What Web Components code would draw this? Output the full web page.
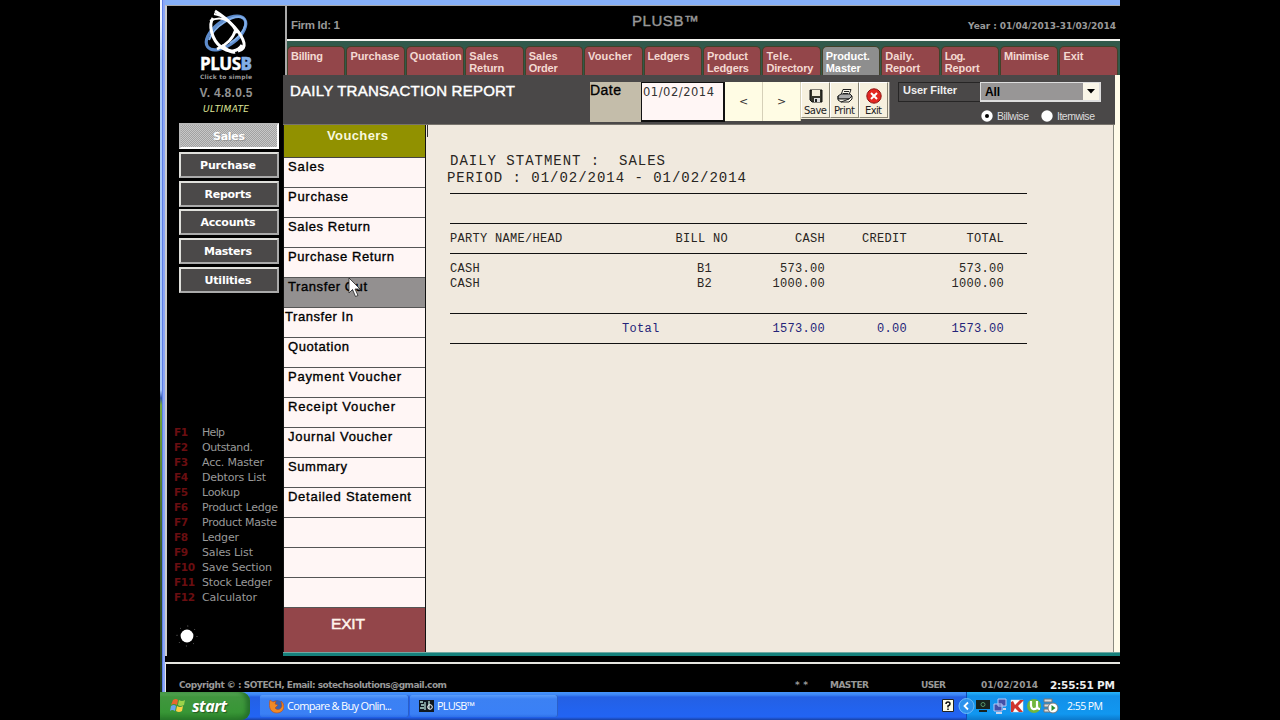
<!DOCTYPE html>
<html lang="en">
<head>
<meta charset="utf-8">
<title>PLUSB</title>
<style>
  body { margin: 0; background: #000; overflow: hidden; }
</style>
</head>
<body>
<plusb-desktop></plusb-desktop>

<script>
// text stretched or tightened to a given width with letter-spacing
class FitText extends HTMLElement {
  constructor() {
    super();
    this.attachShadow({ mode: 'open' });
    this.shadowRoot.innerHTML = '<style>:host { display: inline-block; } span { display: inline-block; white-space: pre; }</style><span><slot></slot></span>';
  }

  connectedCallback() {
    const width = Number(this.getAttribute('w'));
    const span = this.shadowRoot.querySelector('span');
    const count = this.textContent.length;
    if (!width || count < 2) return;

    const gap = (width - span.getBoundingClientRect().width) / (count - 1);
    span.style.letterSpacing = gap + 'px';
    span.style.marginRight = -gap + 'px';
  }
}

const fit = (text, w) => `<fit-text w="${w}">${text}</fit-text>`;


class SideBar extends HTMLElement {
  constructor() {
    super();

    const buttons = [['Purchase', 56], ['Reports', 47], ['Accounts', 55], ['Masters', 48], ['Utilities', 47]];
    const keys = [
      ['Help', 23], ['Outstand.', 51], ['Acc. Master', 62], ['Debtors List', 64],
      ['Lookup', 38], ['Product Ledge', 76], ['Product Maste', 75], ['Ledger', 37],
      ['Sales List', 51], ['Save Section', 70], ['Stock Ledger', 70], ['Calculator', 55]
    ];

    this.attachShadow({ mode: 'open' });
    this.shadowRoot.innerHTML = `
      <style>
        :host {
          display: flex;
          flex-direction: column;
          box-sizing: border-box;
          width: 117px;
          flex: none;
          height: 650px;
          background: #000;
          color: #999;
          font-family: "DejaVu Sans", sans-serif;
        }
        .brand { display: flex; flex-direction: column; align-items: center; height: 117px; margin-right: -1px; }
        .brand > * { flex: none; }
        .brand svg { margin-top: 3px; }
        .name { font: bold 17px/18px "Open Sans", sans-serif; color: #fff; margin-top: -3px; -webkit-text-stroke: .4px; }
        .name b { color: #82aee6; }
        .tag { font: bold 6px/7px "DejaVu Sans", sans-serif; color: #999; }
        .version { font: bold 12px/14px "Liberation Sans", sans-serif; color: #929292; margin-top: 6px; }
        .edition { font: italic 9px/12px "DejaVu Sans", sans-serif; color: #dfe597; margin-top: 3px; }
        .menu { display: flex; flex-direction: column; gap: 2.8px; padding: 0 5px 0 12px; }
        .menu div {
          box-sizing: border-box;
          height: 26px;
          border: 2px solid #e0e0dc;
          border-right-color: #aaa;
          border-bottom-color: #aaa;
          background: #4b4949;
          color: #fff;
          font-size: 11px;
          font-weight: bold;
          line-height: 23px;
          padding-right: 2px;
          text-align: center;
        }
        .menu .active {
          border-color: #b8b8b8 #fff #fff #b8b8b8;
          background: repeating-conic-gradient(#a2a2a2 0 25%, #c8c8c8 0 50%) 0 0 / 2px 2px;
          line-height: 24px;
          padding: 0;
          text-shadow: 1px 1px #999;
        }
        .keys {
          display: grid;
          grid-template-columns: 28px 1fr;
          grid-auto-rows: 15px;
          margin-top: 132px;
          padding-left: 7px;
          font-size: 11px;
          line-height: 15px;
        }
        .keys b { color: #6a0e11; font-size: 10.5px; }
        .sun { margin: 19px 0 0 8px; }
      </style>

      <div class="brand">
        <svg width="50" height="49" viewBox="0 0 50 49" fill="none">
          <ellipse cx="25" cy="24" rx="23" ry="12" transform="rotate(-37 25 24)" stroke="#5d8bcb" stroke-width="3.2"/>
          <path d="M8 31C13 17 33 5 42 9c7 4-1 18-13 25" stroke="#80aee9" stroke-width="2"/>
          <path d="M12 9c-5 7-1 22 8 29 8 6 17 5 21-2" stroke="#fff" stroke-width="3"/>
          <path d="M14 2C29 11 41 25 43 34c1 5-2 7-6 8" stroke="#fff" stroke-width="3"/>
          <path d="M13 5c9 1 18 9 23 19M9 12c13-7 23 2 27 11" stroke="#fff" stroke-width="2"/>
          <path d="M35 20C32 30 24 37 16 40" stroke="#fff" stroke-width="2.8"/>
          <path d="M21 36c4 5 10 8 13 7" stroke="#fff" stroke-width="3"/>
        </svg>
        <div class="name">${fit('PLUS<b>B</b>', 52)}</div>
        <div class="tag">${fit('Click to simple', 52)}</div>
        <div class="version">${fit('V. 4.8.0.5', 53)}</div>
        <div class="edition">${fit('ULTIMATE', 46)}</div>
      </div>

      <div class="menu">
        <div class="active">${fit('Sales', 32)}</div>
        ${buttons.map(([text, w]) => `<div>${fit(text, w)}</div>`).join('')}
      </div>

      <div class="keys">
        ${keys.map(([text, w], i) => `<b>${fit('F' + (i + 1), i > 8 ? 21 : 14)}</b>${fit(text, w)}`).join('')}
      </div>

      <svg class="sun" width="24" height="24" viewBox="0 0 24 24">
        <circle cx="12" cy="12" r="10" fill="none" stroke="#777" stroke-dasharray="1 6.85"/>
        <circle cx="12" cy="12" r="6.4" fill="#fff"/>
      </svg>
    `;
  }
}
window.customElements.define('side-bar', SideBar);


class TopHeader extends HTMLElement {
  constructor() {
    super();

    const tabs = [
      [['Billing', 32]], [['Purchase', 49]], [['Quotation', 52]],
      [['Sales', 29], ['Return', 35]], [['Sales', 29], ['Order', 29]],
      [['Voucher', 44]], [['Ledgers', 42]],
      [['Product', 41], ['Ledgers', 42]], [['Tele.', 26], ['Directory', 47]],
      [['Product.', 44], ['Master', 35]], [['Daily.', 29], ['Report', 35]],
      [['Log.', 21], ['Report', 35]], [['Minimise', 45]], [['Exit', 20]]
    ];

    this.attachShadow({ mode: 'open' });
    this.shadowRoot.innerHTML = `
      <style>
        :host { display: block; font-family: "Liberation Sans", sans-serif; }
        .info {
          display: grid;
          grid-template-columns: 1fr 1fr 1fr;
          height: 33px;
          box-sizing: border-box;
          padding: 0 4px 0 4px;
          background: #000;
          color: #999;
          font-weight: bold;
          font-size: 11.5px;
          line-height: 39px;
        }
        .title { font-size: 15px; line-height: 29px; text-align: left; padding-left: 66px; font-weight: normal; -webkit-text-stroke: .4px; }
        .year { font: bold 9px/40px "DejaVu Sans", sans-serif; text-align: right; }
        .tabs {
          display: grid;
          grid-template-columns: repeat(14, 59.43px);
          height: 36px;
          box-sizing: border-box;
          padding-top: 5px;
          border-top: 2px solid #f4f4f0;
          background: #31594b;
        }
        .tab {
          box-sizing: border-box;
          margin-right: 1px;
          padding: 3px 0 0 3px;
          border: solid #42422a;
          border-width: 1px 1px 0 1px;
          border-radius: 5px 5px 0 0;
          background: #93464a;
          color: #f3d9d2;
          font-size: 11px;
          font-weight: bold;
          line-height: 12px;
        }
        .tab fit-text { display: block; height: 12px; }
        .tab.active { background: #8e8e8e; color: #fff; }
      </style>

      <div class="info">
        <div>${fit('Firm Id: 1', 49)}</div>
        <div class="title">${fit('PLUSB™', 67)}</div>
        <div class="year">${fit('Year : 01/04/2013-31/03/2014', 148)}</div>
      </div>
      <div class="tabs">
        ${tabs.map((lines, i) => `<div class="tab${i === 9 ? ' active' : ''}">${lines.map(([t, w]) => fit(t, w)).join('')}</div>`).join('')}
      </div>
    `;
  }
}
window.customElements.define('top-header', TopHeader);


class ToolButton extends HTMLElement {
  constructor() {
    super();
    this.attachShadow({ mode: 'open' });
    this.shadowRoot.innerHTML = `
      <style>
        :host {
          display: flex;
          flex-direction: column;
          align-items: center;
          box-sizing: border-box;
          width: 29px;
          height: 36px;
          padding-top: 5px;
          border: 1px solid #fff;
          border-right-color: #888474;
          border-bottom-color: #888474;
          background: #f6f0de;
          color: #222;
          font: 10px/14px "DejaVu Sans", sans-serif;
        }
        ::slotted(*) { flex: none; }
      </style>
      <slot></slot>
    `;
  }
}
window.customElements.define('tool-button', ToolButton);


class ReportToolbar extends HTMLElement {
  constructor() {
    super();
    this.attachShadow({ mode: 'open' });
    this.shadowRoot.innerHTML = `
      <style>
        :host {
          display: flex;
          box-sizing: border-box;
          width: 832px;
          height: 50px;
          padding: 7px 0 0 7px;
          background: #4a4848;
          border-bottom: 1px solid #77736c;
          font-family: "Liberation Sans", sans-serif;
        }
        h1 { flex: none; width: 300px; margin: 0; color: #fff; font-size: 15px; font-weight: normal; line-height: 18px; -webkit-text-stroke: .45px; }
        .date, .value, .arrow, .tools, .filter { flex: none; }
        .date { box-sizing: border-box; width: 51px; height: 40px; background: #c4bdaa; font-size: 14px; line-height: 17px; -webkit-text-stroke: .35px; }
        .value {
          box-sizing: border-box;
          width: 84px;
          height: 40px;
          padding-left: 2px;
          border: solid #111;
          border-width: 1px 2px 2px 1px;
          background: #fff6f5;
          color: #333;
          font: 11.5px/18px "DejaVu Sans", sans-serif;
        }
        .value fit-text { margin-left: -1px; }
        .arrow { width: 37px; height: 39px; background: #fffce4; border-right: 1px solid #d6d0b8; color: #333; font: 11px/40px "DejaVu Sans", sans-serif; text-align: center; }
        .tools { display: flex; width: 89px; height: 37px; margin: 0 8px 0 0; background: #f3edda; border-right: 1px solid #888; box-sizing: border-box; }
        .filter { display: flex; flex-direction: column; }
        .user { display: flex; height: 20px; }
        .label { box-sizing: border-box; width: 82px; height: 20px; padding-left: 4px; border: 1px solid #262525; border-right: 0; color: #eee; font-size: 11px; font-weight: bold; line-height: 15px; }
        .select { display: flex; justify-content: space-between; box-sizing: border-box; width: 121px; height: 20px; border: 1px solid #ddd; border-width: 1px 2px 2px 1px; background: #989696; font-weight: bold; font-size: 12px; line-height: 19px; padding-left: 4px; }
        .drop { display: flex; align-items: center; justify-content: center; width: 16px; background: #faf6e8; }
        .modes { display: flex; align-items: center; height: 22px; margin-top: 3px; padding-left: 83px; color: #ddd; font-size: 10.5px; line-height: 22px; }
        .modes svg { margin-right: 4px; }
        .modes .second { margin-left: 12px; }
      </style>

      <h1>${fit('DAILY TRANSACTION REPORT', 225)}</h1>
      <div class="date">${fit('Date', 31)}</div>
      <div class="value">${fit('01/02/2014', 71)}</div>
      <div class="arrow">&lt;</div>
      <div class="arrow">&gt;</div>
      <div class="tools">
        <tool-button>
          <svg width="16" height="16" viewBox="0 0 16 16">
            <path d="M2 2h12v12H4l-2-2z" fill="#35352b" stroke="#111"/>
            <path d="M4 2h8v6H4z" fill="#f3edda"/>
            <path d="M6 10h6v4H6z" fill="#ddd"/><path d="M7 11h2v3H7z" fill="#222"/>
          </svg>
          ${fit('Save', 23)}
        </tool-button>
        <tool-button>
          <svg width="18" height="16" viewBox="0 0 18 16" fill="#f8f5e8" stroke="#222">
            <path d="M5 7l2-5.5h8L13 7"/><path d="M8 3.5h5M7 5.5h5" />
            <path d="M2 8l3-2h9l2 2-3 3H2z" fill="#aaa"/>
            <path d="M2 8v4l3 2h8l3-3V8l-3 3H2M5 14l8-3"/>
          </svg>
          ${fit('Print', 21)}
        </tool-button>
        <tool-button>
          <svg width="16" height="16" viewBox="0 0 16 16">
            <circle cx="8" cy="8" r="7.2" fill="#e32722" stroke="#8d1513"/>
            <path d="M5 5l6 6M11 5l-6 6" stroke="#fff" stroke-width="2"/>
          </svg>
          ${fit('Exit', 17)}
        </tool-button>
      </div>
      <div class="filter">
        <div class="user">
          <div class="label">${fit('User Filter', 54)}</div>
          <div class="select">${fit('All', 15)}<div class="drop"><svg width="8" height="5"><path d="M0 0h8L4 4.5z"/></svg></div></div>
        </div>
        <div class="modes">
          <svg width="12" height="12"><circle cx="6" cy="6" r="5.7" fill="#fff"/><circle cx="6" cy="6" r="2" fill="#000"/></svg>
          ${fit('Billwise', 32)}
          <svg class="second" width="12" height="12"><circle cx="6" cy="6" r="5.7" fill="#fff"/></svg>
          ${fit('Itemwise', 38)}
        </div>
      </div>
    `;
  }
}
window.customElements.define('report-toolbar', ReportToolbar);


class VoucherList extends HTMLElement {
  constructor() {
    super();

    const rows = [
      ['Sales', 36], ['Purchase', 60], ['Sales Return', 82], ['Purchase Return', 106],
      ['Transfer Out', 79], ['Transfer In', 68], ['Quotation', 61], ['Payment Voucher', 113],
      ['Receipt Voucher', 107], ['Journal Voucher', 104], ['Summary', 59], ['Detailed Statement', 123],
      null, null, null
    ];

    this.attachShadow({ mode: 'open' });
    this.shadowRoot.innerHTML = `
      <style>
        :host { display: block; position: relative; width: 143px; background: #111; font-family: "Liberation Sans", sans-serif; }
        .head, .row, .exit { box-sizing: border-box; margin: 0 1px; }
        .head { height: 33px; background: #919100; border-bottom: 1px solid #444; color: #f8f8dc; font-size: 13px; font-weight: bold; line-height: 21px; padding-left: 43px; }
        .row { height: 30px; padding-left: 4px; border-bottom: 1px solid #555; background: #fff6f5; color: #000; font-size: 13px; line-height: 18px; -webkit-text-stroke: .35px; }
        .row.hover { background: #939090; }
        .row.shifted { padding-left: 1px; }
        .exit { height: 44px; background: #93464a; color: #fff4ec; font-size: 15.5px; line-height: 32px; padding-left: 47px; -webkit-text-stroke: .5px; }
        .pointer { position: absolute; left: 65px; top: 152px; }
      </style>

      <div class="head">${fit('Vouchers', 61)}</div>
      ${rows.map((row, i) => `<div class="row${i === 4 ? ' hover' : ''}${i === 5 ? ' shifted' : ''}">${row ? fit(row[0], row[1]) : ''}</div>`).join('')}
      <div class="exit">${fit('EXIT', 34)}</div>
      <svg class="pointer" width="13" height="21" viewBox="0 0 13 21">
        <path d="M1 1v15l3.500-3.500 3 7 2.500-1-3-6.500H12z" fill="#fff" stroke="#222" stroke-width=".8"/>
      </svg>
    `;
  }
}
window.customElements.define('voucher-list', VoucherList);


class DailyStatement extends HTMLElement {
  constructor() {
    super();
    this.attachShadow({ mode: 'open' });
    this.shadowRoot.innerHTML = `
      <style>
        :host {
          display: block;
          box-sizing: border-box;
          width: 688px;
          padding: 28px 86px 0 24px;
          border-right: 1px solid #8a8a80;
          background: linear-gradient(#333, #333) 1px 0 / 1px 12px no-repeat #f0e9de;
          color: #282522;
          font: 12px/16px "Liberation Mono", monospace;
          letter-spacing: .3px;
        }
        .line { height: 17px; font-size: 14px; line-height: 17px; letter-spacing: 0; }
        .line.period { margin-left: -3px; }
        hr { height: 1px; margin: 0; border: 0; background: #111; }
        .line + hr { margin-top: 6px; }
        .gap { height: 29px; }
        .row { display: grid; grid-template-columns: 225px 53px 97px 82px 97px; height: 15px; text-align: right; }
        .row :first-child { text-align: left; }
        .bill { padding-right: 16px; }
        .head, .total { padding: 7px 0; }
        .head .bill { padding: 0; }
        .body { padding: 7px 0 22px; }
        .total { color: #242479; }
        .total .row :first-child { padding-left: 172px; }
      </style>

      <div class="line">${fit('DAILY STATMENT :  SALES', 215)}</div>
      <div class="line period">${fit('PERIOD : 01/02/2014 - 01/02/2014', 299)}</div>
      <hr>
      <div class="gap"></div>
      <hr>
      <div class="head"><div class="row"><span>PARTY NAME/HEAD</span><span class="bill">BILL NO</span><span>CASH</span><span>CREDIT</span><span>TOTAL</span></div></div>
      <hr>
      <div class="body">
        <div class="row"><span>CASH</span><span class="bill">B1</span><span>573.00</span><span></span><span>573.00</span></div>
        <div class="row"><span>CASH</span><span class="bill">B2</span><span>1000.00</span><span></span><span>1000.00</span></div>
      </div>
      <hr>
      <div class="total"><div class="row"><span>Total</span><span></span><span>1573.00</span><span>0.00</span><span>1573.00</span></div></div>
      <hr>
    `;
  }
}
window.customElements.define('daily-statement', DailyStatement);


class StatusBar extends HTMLElement {
  constructor() {
    super();
    this.attachShadow({ mode: 'open' });
    this.shadowRoot.innerHTML = `
      <style>
        :host {
          display: grid;
          grid-template-columns: 616px 35px 91px 60px 69px 1fr;
          box-sizing: border-box;
          height: 30px;
          padding: 0 0 0 13px;
          border-top: 2px solid #e6e6e0;
          border-left: 1px solid #e6e6e0;
          background: #000;
          color: #989898;
          font: bold 9px/42px "DejaVu Sans", sans-serif;
        }
        .mail { font-size: 9px; }
        .date { font-size: 9px; }
        .time { color: #eee; font-size: 10.5px; }
      </style>
      <span class="mail">${fit('Copyright © : SOTECH, Email: sotechsolutions@gmail.com', 268)}</span>
      <span>${fit('**', 13)}</span>
      <span>${fit('MASTER', 39)}</span>
      <span>${fit('USER', 25)}</span>
      <span class="date">${fit('01/02/2014', 57)}</span>
      <span class="time">${fit('2:55:51 PM', 65)}</span>
    `;
  }
}
window.customElements.define('status-bar', StatusBar);


class TaskBar extends HTMLElement {
  constructor() {
    super();
    this.attachShadow({ mode: 'open' });
    this.shadowRoot.innerHTML = `
      <style>
        :host {
          display: flex;
          height: 28px;
          background: linear-gradient(#4796fb 0, #3b84f5 3px, #2460e4 5px, #2263ef 18px, #2264f3 25px, #1941a5);
          color: #fff;
          font: 11px/22px "Open Sans", sans-serif;
        }
        .start {
          display: flex;
          align-items: center;
          gap: 5px;
          box-sizing: border-box;
          width: 90px;
          padding-left: 10px;
          border-radius: 0 9px 9px 0;
          background: linear-gradient(#60b15d, #40963e 5px, #389636 20px, #287b28);
          box-shadow: inset -4px 0 4px #26702c;
          font: italic bold 16px/24px "Open Sans", sans-serif;
          text-shadow: 1px 1px 1px #245b23;
        }
        .task { display: flex; align-items: center; box-sizing: border-box; height: 22px; margin-top: 3px; background: linear-gradient(#5a9dfa, #3c81f3 4px, #3a80f6 19px, #2f71e7); border-radius: 2px; box-shadow: inset -1px 0 #2a5fc9; padding-left: 9px; }
        .task svg { margin-right: 3px; }
        .spacer { flex: 1; }
        .help { margin: 7px 12px 0 0; }
        .tray { display: flex; align-items: center; box-sizing: border-box; width: 154px; border-left: 1px solid #134bb5; background: linear-gradient(#28b5fa, #1290e9 4px, #1197f0 22px, #0b79cc); font-size: 10.5px; }
        .chevron { margin-left: -9px; }
        .clock { margin-left: 5px; }
      </style>

      <div class="start">
        <svg width="17" height="16" viewBox="0 0 17 16">
          <path d="M3 2q3-2 5 0L7 7Q4 5 1 7z" fill="#e9662e"/>
          <path d="M9 2q3 2 6 0l-1 5q-4 2-6 0z" fill="#9bd34b"/>
          <path d="M1 8q3-2 5 0l-1 5q-3-2-5 0z" fill="#6aa4ee"/>
          <path d="M7 8q3 2 6 0l-1 5q-3 2-6 0z" fill="#fbd045"/>
        </svg>
        ${fit('start', 35)}
      </div>

      <div class="task" style="width: 149px; margin-left: 10px">
        <svg width="15" height="15" viewBox="0 0 15 15">
          <circle cx="8" cy="7" r="6" fill="#3b63b2"/>
          <path d="M1 1l3 2 3-1-1 3 3 1-3 3c3 3 6 1 7-2l-1-5c6 5 2 12-4 12S-1 9 1 1z" fill="#ef8925" stroke="#b84a19" stroke-width=".6"/>
        </svg>
        ${fit('Compare &amp; Buy Onlin...', 105)}
      </div>
      <div class="task" style="width: 148px; margin-left: 1px">
        <svg width="15" height="14" viewBox="0 0 15 14">
          <path fill="#101820" d="M0 1h15v12H0z"/>
          <path d="M1 3h3M2 6h3M1 9h4M6 3v8M10 2v8" stroke="#b5ded3" stroke-width="1.3"/>
          <circle cx="11" cy="8" r="2.300" fill="none" stroke="#fff"/>
        </svg>
        ${fit('PLUSB™', 38)}
      </div>

      <div class="spacer"></div>
      <svg class="help" width="12" height="14" viewBox="0 0 12 14">
        <path fill="#fffde6" stroke="#222" d="M.5.500h11v12H.500z"/>
        <path d="M4 5q0-2 2-2t2 2q0 1-2 2v1.500M6 9.500v1.500" fill="none" stroke="#111" stroke-width="1.500"/>
      </svg>
      <div class="tray">
        <svg class="chevron" width="17" height="18" viewBox="0 0 17 18">
          <circle cx="8.500" cy="9" r="7.500" fill="#2c92ed" stroke="#6cbcf8"/>
          <path d="M10 5.500L6.500 9l3.500 3.500" fill="none" stroke="#fff" stroke-width="1.800"/>
        </svg>
        <svg width="87" height="18" viewBox="0 0 87 18">
          <path d="M1 3h14v9H1zM4 13h8v2H4z" fill="#18231f"/><circle cx="8" cy="7.500" r="2" fill="none" stroke="#579669"/>
          <path d="M23 2h8v7h-8zM19 7h8v7h-8z" fill="#4450a8" stroke="#b9c9f7"/><path d="M21 16h6M28 12h3" stroke="#cad5ee" stroke-width="2"/>
          <path d="M36 3h12v12H36z" fill="#fff" stroke="#ddd" stroke-width=".5"/><path d="M36 5l2-1 2 4 5-5h4l-6 6 5 6h-4l-4-4-2 4h-2z" fill="#d0342e"/>
          <circle cx="59" cy="9" r="7" fill="#72b63c"/><path d="M56 4v5q1 5 6 2V4M62 9q0 3 3 3" fill="none" stroke="#fff" stroke-width="2.200"/>
          <path d="M69 2h8v3h-8zM69 7h8v3h-8zM69 12h6v3h-6z" fill="#ddd" stroke="#777"/><circle cx="78" cy="11" r="5" fill="#fff" stroke="#777"/><path d="M76.500 8v6l4-3z" fill="#288e2f"/>
        </svg>
        <span class="clock">${fit('2:55 PM', 36)}</span>
      </div>
    `;
  }
}
window.customElements.define('task-bar', TaskBar);


class PlusbDesktop extends HTMLElement {
  constructor() {
    super();
    this.attachShadow({ mode: 'open' });
    this.shadowRoot.innerHTML = `
      <style>
        :host { display: flex; flex-direction: column; width: 960px; height: 720px; margin: 0 auto; overflow: hidden; background: #000; }
        .screen { display: flex; height: 692px; }
        .edge { width: 5px; flex: none; background: linear-gradient(90deg, transparent 0 2px, #5e80e8 2px 3px, #8ca6f5 3px), linear-gradient(#f0f4ff 0 20px, #a9c8f8 60px 390px, #3457a8 398px, #75a83c 405px, #38582b 560px, #1d3219); }
        .window { flex: 1; min-width: 0; border-top: 5px solid #86b0f8; }
        .app { display: flex; height: 651px; box-sizing: border-box; border-top: 1px solid #aaa; border-left: 2px solid #ccc; }
        .main { flex: 1; min-width: 0; margin-left: -1px; }
        top-header { margin-left: 2px; border-left: 2px solid #aaa; margin-right: 0; }
        .content { display: flex; height: 577px; background: #fffbe9; }
        .left { display: flex; flex-direction: column; }
        .body { display: flex; height: 527px; }
        .teal { height: 4px; background: linear-gradient(#70a8a2 1px, #16817c 1px); }
        status-bar { margin-top: 6px; }
      </style>

      <div class="screen">
        <div class="edge"></div>
        <div class="window">
          <div class="app">
            <side-bar></side-bar>
            <div class="main">
              <top-header></top-header>
              <div class="content">
                <div class="left">
                  <report-toolbar></report-toolbar>
                  <div class="body"><voucher-list></voucher-list><daily-statement></daily-statement></div>
                </div>
              </div>
              <div class="teal"></div>
            </div>
          </div>
          <status-bar></status-bar>
        </div>
      </div>
      <task-bar></task-bar>
    `;
  }
}
window.customElements.define('plusb-desktop', PlusbDesktop);

// last, so every label is already laid out when it gets measured
window.customElements.define('fit-text', FitText);
</script>
</body>
</html>
